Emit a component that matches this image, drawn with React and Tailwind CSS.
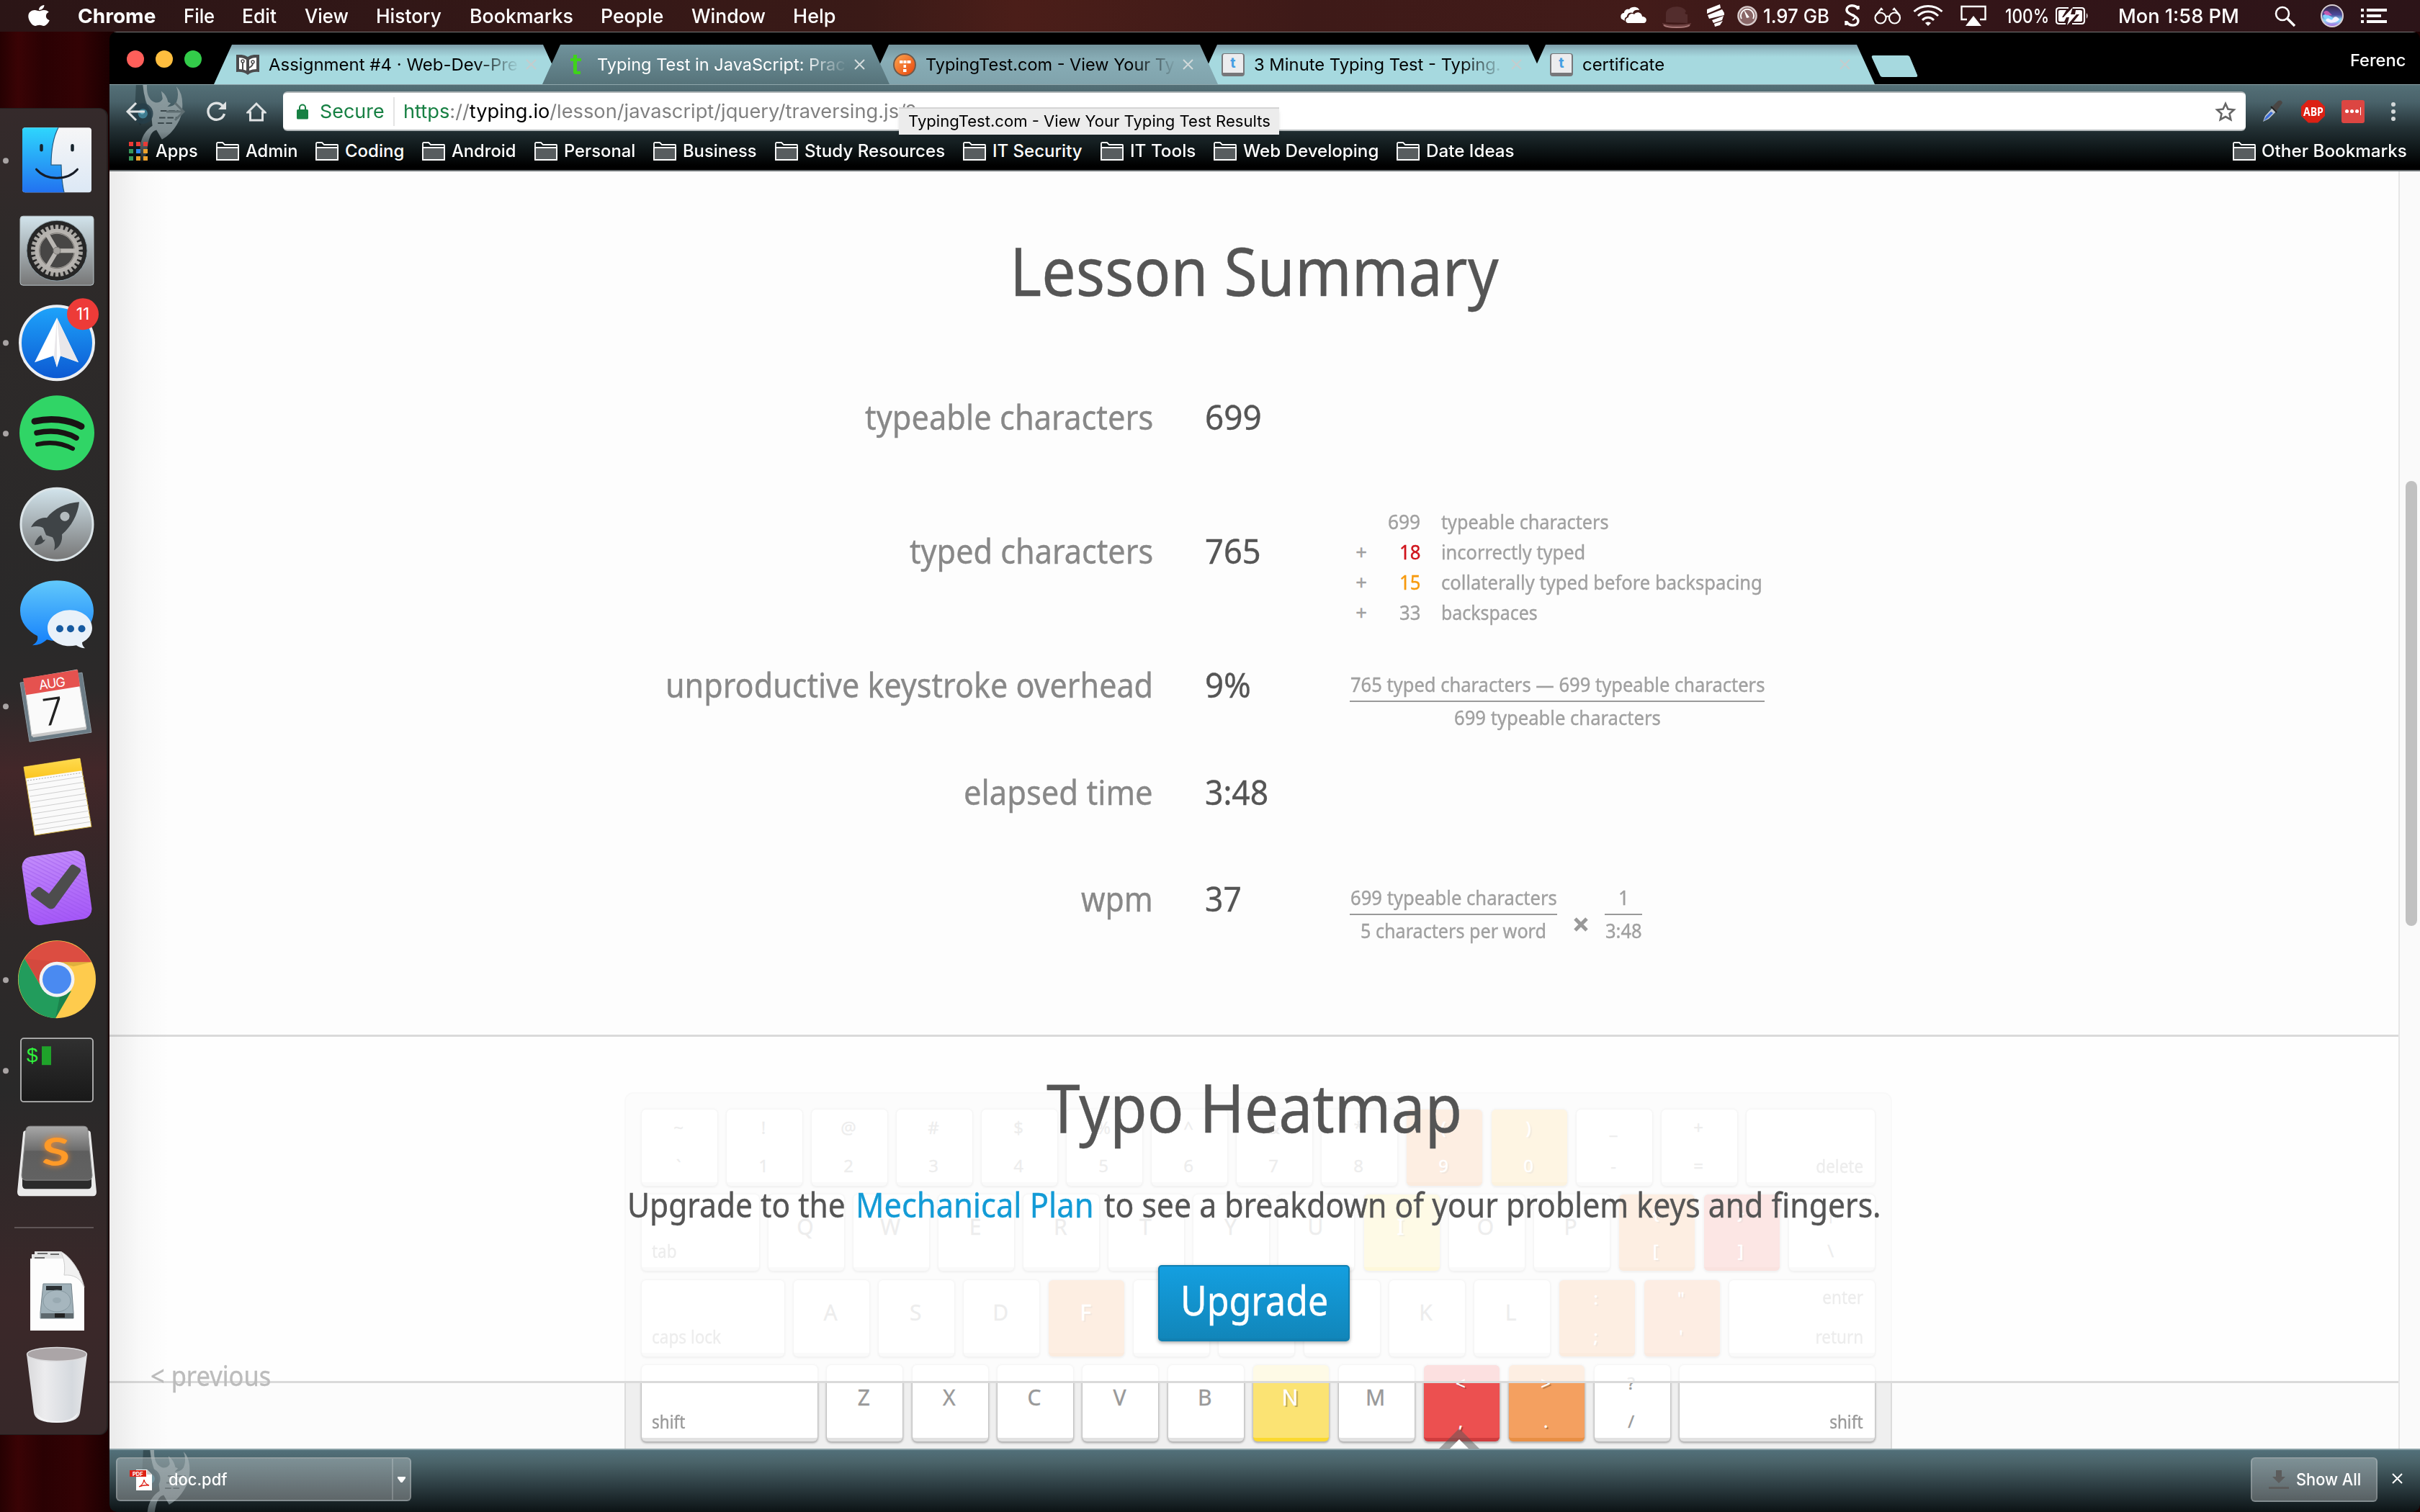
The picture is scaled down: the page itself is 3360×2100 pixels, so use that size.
import React, { useLayoutEffect, useRef } from "react";
import { FaApple } from "react-icons/fa";

/* Text set to an exact advance width: measured once, then stretched. */
function Fit({ w, className = "", children }) {
  const ref = useRef(null);
  useLayoutEffect(() => {
    const el = ref.current;
    el.style.transform = "none";
    const natural = el.offsetWidth;
    if (natural) el.style.transform = `scaleX(${w / natural})`;
  }, [w]);
  return (
    <span className={"block shrink-0 " + className} style={{ width: w }}>
      <span ref={ref} className="inline-block origin-left whitespace-pre">{children}</span>
    </span>
  );
}

/* ---------- Menu bar ---------- */
const menus = [
  ["Chrome", 108], ["File", 43], ["Edit", 48], ["View", 61], ["History", 91],
  ["Bookmarks", 144], ["People", 87], ["Window", 103], ["Help", 60],
];

function MenuBar() {
  return (
    <div className="flex h-[44px] items-center bg-[linear-gradient(90deg,#2b1516_0%,#351817_25%,#3a1a17_36%,#4b1e19_42%,#3e1a18_54%,#421b19_68%,#341518_80%,#2c1418_100%)] text-[27.5px] leading-[44px] text-white">
      <div className="ml-[39px] flex w-[69px]">
        <FaApple className="-mt-0.5 h-[33px] w-[30px]" preserveAspectRatio="none" />
      </div>
      <div className="flex gap-[38.5px]">
        {menus.map(([t, w], i) => (
          <Fit key={t} w={w} className={i === 0 ? "font-bold" : "font-medium"}>{t}</Fit>
        ))}
      </div>
      <div className="ml-auto mr-[46px] flex items-center">
        <svg className="h-[44px] w-[36px]" viewBox="0 0 36 44" fill="#fff">
          <path d="M1 26c-2-5 1-8 4-8 0-4 4-6 7-5 3-5 13-4 14 1-4-1-8 0-9 4-5-2-8 2-8 5-3 1-4 4-3 6z" />
          <path d="M10 32c-4-1-4-7 1-8 0-5 6-6 8-4 3-5 11-3 11 3 8 0 7 9 2 9z" />
        </svg>
        <svg className="ml-[22px] h-[44px] w-[40px]" viewBox="0 0 40 44">
          <path d="M5 31V19c0-12 25-13 28-3-3 2-1 4 2 4v12z" fill="#532d2d" />
          <path d="M0 32c5 3 32 3 40 0-1 4-5 7-20 7S2 37 0 32z" fill="#6c4040" />
          <path d="M2 35c6 4 30 4 36 0" stroke="#a87877" strokeWidth="2" fill="none" />
        </svg>
        <svg className="ml-[22px] h-[44px] w-[24px]" viewBox="0 0 24 44" fill="#fff">
          <path d="M0 13 18 6l1 5L0 19zM1 21l20-8 3 5v3L3 26zM7 28l16-6-2 6-12 4zM10 33l12-4-4 6-7 2z" />
        </svg>
        <svg className="ml-[18px] h-[44px] w-[28px]" viewBox="0 0 28 44">
          <circle cx="14" cy="22" r="12.6" fill="#8a6767" stroke="#d8cccc" strokeWidth="2.4" />
          <path d="M6 26a9 9 0 1 1 16 0" stroke="#fff" strokeWidth="1.8" fill="none" />
          <path d="M9 13l8 11-4 1z" fill="#fff" />
        </svg>
        <Fit w={92} className="ml-[8px] font-medium">1.97 GB</Fit>
        <svg className="ml-[21px] h-[44px] w-[22px]" viewBox="0 0 22 44" fill="none" stroke="#fff" strokeWidth="3.4">
          <path d="M19 8v5M19 13C16 6 4 6 3 13c-1 8 16 8 16 16 0 8-13 8-16 1M2 35v-6" />
          <path d="M11 20c5 2 5 5 0 8" strokeWidth="2" />
        </svg>
        <svg className="ml-[19px] h-[44px] w-[38px]" viewBox="0 0 38 44" fill="none" stroke="#fff" strokeWidth="2.2">
          <circle cx="9" cy="25" r="7.5" /><circle cx="28.5" cy="25" r="7.5" />
          <path d="M16.500 24c1-2 4-2 5 0M2 22 10 12l2 2M36 22 28 12l-2 2" />
        </svg>
        <svg className="ml-[16px] h-[44px] w-[42px]" viewBox="0 0 42 44" fill="none" stroke="#fff" strokeWidth="3">
          <path d="M1.500 16c11-10 28-10 39 0M7 22c8-8 20-8 28 0M13 28c5-5 11-5 16 0" />
          <path d="M21 36l-4-4c2-2 6-2 8 0z" fill="#fff" stroke="none" />
        </svg>
        <svg className="ml-[24px] h-[44px] w-[36px]" viewBox="0 0 36 44" fill="none" stroke="#fff" strokeWidth="2.4">
          <path d="M9 27H1.500V9h33v18H27" /><path d="M18 22 29 36H7z" fill="#fff" stroke="none" />
        </svg>
        <Fit w={61} className="ml-[26px] font-medium">100%</Fit>
        <svg className="ml-[9px] h-[44px] w-[46px]" viewBox="0 0 46 44" fill="none" stroke="#fff" strokeWidth="2.2">
          <path d="M18 11H5q-4 0-4 4v14q0 4 4 4h9M24 11h12q4 0 4 4v14q0 4-4 4H23" />
          <path d="M15 14H6q-2 0-2 2v12q0 2 2 2h6l3-6H9zM28 14h6q3 0 3 2v12q0 2-3 2h-9l8-10h-6z" fill="#fff" stroke="none" />
          <path d="M24 10 11 24h8l-3 11 13-15h-8z" fill="#fff" stroke="none" />
          <path d="M43 18q3 4 0 8z" fill="#fff" stroke="none" />
        </svg>
        <Fit w={168} className="ml-[41px] font-medium">Mon 1:58 PM</Fit>
        <svg className="ml-[49px] h-[44px] w-[30px]" viewBox="0 0 30 44" fill="none" stroke="#fff" strokeWidth="2.6">
          <circle cx="11" cy="19" r="9" /><path d="M17.500 25.500 28 36" strokeWidth="3.4" />
        </svg>
        <svg className="ml-[34px] h-[44px] w-[32px]" viewBox="0 0 32 44">
          <defs>
            <linearGradient id="siri" x1="0" y1="0" x2="0" y2="1">
              <stop offset="0" stopColor="#35233f" /><stop offset=".45" stopColor="#4b4a9c" />
              <stop offset=".7" stopColor="#8ee0f4" /><stop offset="1" stopColor="#a85ce0" />
            </linearGradient>
          </defs>
          <circle cx="16" cy="22" r="15" fill="url(#siri)" stroke="#d8cfd3" strokeWidth="2" />
          <path d="M3 22c7-8 18 12 26 2-3 9-9 8-14 5S6 29 3 22z" fill="#7fd0ff" />
          <path d="M7 28c4-7 7 3 10-2s7-2 9 1c-4 5-15 7-19 1z" fill="#f4f0ff" />
          <path d="M4 17c5-5 8 0 12 4-5 0-9 2-12-4z" fill="#e060b8" opacity=".8" />
        </svg>
        <svg className="ml-[24px] h-[44px] w-[36px]" viewBox="0 0 36 44" fill="#fff">
          <path d="M0 12h4v4H0zM8 12h28v4H8zM0 20h4v4H0zM8 20h20v4H8zM0 28h4v4H0zM8 28h28v4H8z" />
        </svg>
      </div>
    </div>
  );
}

/* ---------- Dock ---------- */
function DockItem({ running, children }) {
  return (
    <svg className="block h-[126.4px] w-[150px] shrink-0 overflow-visible" viewBox="0 -63.2 150 126.4">
      {running && <circle cx="8" cy="1" r="4" fill="#a9a4a4" />}
      {children}
    </svg>
  );
}

const teeth = Array.from({ length: 30 }, (_, i) => i * 12);
const noteLines = [-17, -9, -1, 7, 15, 23, 31, 39, 46];

function Dock() {
  return (
    <div className="mt-[106px] flex h-[1843px] w-[150px] flex-col rounded-r-[12px] border-y border-r-2 border-[#242020] bg-[linear-gradient(180deg,#352a2b_0%,#2e2a29_10%,#2a2929_40%,#2c2929_44%,#432729_50%,#3a2628_54%,#2e2929_62%,#292929_74%,#3b2829_90%,#372829_100%)] pt-[8px]">
      <svg className="absolute h-0 w-0">
        <defs>
          <linearGradient id="fBlue" x1="0" y1="0" x2="0" y2="1"><stop offset="0" stopColor="#2ed6fd" /><stop offset="1" stopColor="#2272f0" /></linearGradient>
          <linearGradient id="fWhite" x1="0" y1="0" x2="0" y2="1"><stop offset="0" stopColor="#f6f6f7" /><stop offset="1" stopColor="#dce8f5" /></linearGradient>
          <linearGradient id="metal" x1="0" y1="0" x2="0" y2="1"><stop offset="0" stopColor="#d2e4ec" /><stop offset="1" stopColor="#767676" /></linearGradient>
          <linearGradient id="spark" x1="0" y1="0" x2="0" y2="1"><stop offset="0" stopColor="#1ea4fb" /><stop offset="1" stopColor="#0c58d2" /></linearGradient>
          <linearGradient id="msg" x1="0" y1="0" x2="0" y2="1"><stop offset="0" stopColor="#62c9fb" /><stop offset="1" stopColor="#1480fb" /></linearGradient>
          <linearGradient id="omni" x1="0" y1="0" x2="0" y2="1"><stop offset="0" stopColor="#c28bfb" /><stop offset="1" stopColor="#a557f8" /></linearGradient>
          <linearGradient id="gold" x1="0" y1="0" x2="0" y2="1"><stop offset="0" stopColor="#ffdb50" /><stop offset="1" stopColor="#fbc51f" /></linearGradient>
          <linearGradient id="subl" x1="0" y1="0" x2="0" y2="1"><stop offset="0" stopColor="#a8a8a8" /><stop offset=".45" stopColor="#6c6c6c" /><stop offset=".46" stopColor="#5e5e5e" /><stop offset="1" stopColor="#626262" /></linearGradient>
          <linearGradient id="bin" x1="0" y1="0" x2="1" y2="0"><stop offset="0" stopColor="#d9d9db" /><stop offset=".3" stopColor="#ececee" /><stop offset=".75" stopColor="#d5d9de" /><stop offset="1" stopColor="#e6e6e8" /></linearGradient>
          <linearGradient id="term" x1="0" y1="0" x2="0" y2="1"><stop offset="0" stopColor="#303030" /><stop offset="1" stopColor="#181818" /></linearGradient>
          <pattern id="stripe" width="5" height="5" patternUnits="userSpaceOnUse" patternTransform="rotate(35)"><rect width="5" height="1.400" fill="#9350e6" opacity=".4" /></pattern>
        </defs>
      </svg>
      <DockItem running>
        <rect x="31" y="-45" width="96" height="90" rx="4" fill="url(#fWhite)" />
        <path d="M35-45h46C73-30 71-10 71 7h14q0 20 4 38H35q-4 0-4-4v-82q0-4 4-4z" fill="url(#fBlue)" />
        <path d="M81-45C73-30 71-10 71 7h14q0 20 4 38" fill="none" stroke="#235a80" strokeWidth="1.200" />
        <path d="M57.500-20v6M100.500-20v6" stroke="#16232c" strokeWidth="4.500" strokeLinecap="round" />
        <path d="M50.500 13c14 16 43 16 57 0" stroke="#161c26" strokeWidth="3" fill="none" strokeLinecap="round" />
      </DockItem>
      <DockItem>
        <rect x="28" y="-48" width="102" height="96" rx="4" fill="url(#metal)" stroke="#b9c4c8" strokeWidth="1" />
        <circle cx="79" cy="0" r="42" fill="#262626" stroke="#8fa0a8" strokeWidth="1" />
        {teeth.map((a) => <rect key={a} x="76.800" y="-36" width="4.400" height="9" fill="#a8a6a2" transform={`rotate(${a} 79 0)`} />)}
        <circle cx="79" cy="0" r="27" fill="#474645" stroke="#b6b3af" strokeWidth="7" />
        <circle cx="79" cy="0" r="24.500" fill="none" stroke="#77746f" strokeWidth="1" />
        <path d="M79 0h26M79 0 66-22M79 0 66 22" stroke="#b9b6b2" strokeWidth="6" />
        <circle cx="79" cy="0" r="5" fill="#a5a29e" stroke="#7b7875" />
      </DockItem>
      <DockItem running>
        <circle cx="79" cy="1" r="51" fill="url(#spark)" stroke="#ebeef2" strokeWidth="4" />
        <path d="M79-34 109 28 84 19 79 35 74 19 48 28z" fill="#fff" />
        <path d="M79-34 109 28 84 19zM79-34 75 20l4 15z" fill="#e9e7ea" />
        <circle cx="115" cy="-39" r="22" fill="#ed3b38" />
        <text x="115" y="-31" textAnchor="middle" fontSize="23" fill="#fff" fontFamily="Inter">11</text>
      </DockItem>
      <DockItem running>
        <circle cx="79" cy="0" r="52" fill="#30d566" />
        <g fill="none" stroke="#191414" strokeLinecap="round">
          <path d="M48-16c22-5 46-3 65 7" strokeWidth="9" />
          <path d="M51 0c19-4 39-2 55 7" strokeWidth="7.500" />
          <path d="M52 16c17-4 34-2 49 6" strokeWidth="6" />
        </g>
      </DockItem>
      <DockItem>
        <circle cx="79" cy="0" r="50" fill="url(#metal)" stroke="#dbe4e8" strokeWidth="3" />
        <path d="M110-31c-18 1-35 9-45 22-9-1-17 4-22 13 7-2 13-1 17 1l4 10 9 3c3 5 4 11 2 18 8-5 12-12 11-22C99 3 108-13 110-31z" fill="#3f4447" />
        <circle cx="90" cy="-11" r="6.500" fill="#b4bbbe" />
        <path d="M57 15c-5 3-8 8-9 14 6 0 13-3 15-8l-3 1z" fill="#3f4447" />
      </DockItem>
      <DockItem>
        <path d="M79-48c29 0 51 18 51 42S108 36 79 36c-6 0-10-1-14-2-5 5-12 8-20 8 6-4 8-7 7-13C38 22 28 10 28-6c0-24 22-42 51-42z" fill="url(#msg)" />
        <path d="M97-7c17 0 31 11 31 25 0 9-6 16-14 20 0 4 2 6 4 8-5 0-9-2-12-4-22 5-40-8-40-24 0-14 14-25 31-25z" fill="#e9f1f9" />
        <circle cx="83" cy="19" r="5" fill="#175aa0" /><circle cx="98" cy="19" r="5" fill="#175aa0" /><circle cx="113.500" cy="19" r="5" fill="#175aa0" />
      </DockItem>
      <DockItem running>
        <path d="M28-32 114-46 127 37 41 50z" fill="#6c7c86" stroke="#8c9aa2" />
        <path d="M33-37 107-50 120 31 44 42z" fill="#fafafa" stroke="#bdbdbd" />
        <path d="M32-38 108-50 111-27 36-15z" fill="#e5524f" />
        <path d="M44 40 120 29v4L46 44z" fill="#c9c9c9" />
        <g transform="rotate(-8 74 -27)" textAnchor="middle" fontFamily="Inter">
          <text x="73" y="-25" fontSize="18" fill="#fff" textLength="37">AUG</text>
          <text x="69" y="26" fontSize="52" fontWeight="300" fill="#222">7</text>
        </g>
      </DockItem>
      <DockItem>
        <path d="M33-42 111-54 127 41 48 53z" fill="#fafafa" stroke="#c8a838" strokeWidth="1" />
        <path d="M33-42 111-54 114-37 36-26z" fill="url(#gold)" />
        <g stroke="#cfcfcf" strokeWidth="1">
          {noteLines.map((y, i) => <line key={y} x1={38.5 + i * 1.3} y1={y} x2={116 + i * 1.3} y2={y - 12} />)}
        </g>
        <path d="M38-23 114-34" stroke="#aaa" strokeDasharray="2 2" />
      </DockItem>
      <DockItem>
        <g transform="rotate(-8 79 0)">
          <rect x="35" y="-48" width="88" height="96" rx="14" fill="url(#omni)" />
          <rect x="35" y="-48" width="88" height="96" rx="14" fill="url(#stripe)" />
        </g>
        <path d="M43 7 52-1q2-1 4 0L68 8 98-31q2-2 5-1l8 5q2 2 1 4L76 27q-4 4-9 1L44 11q-2-2-1-4z" fill="#4d4d4d" />
      </DockItem>
      <DockItem running>
        <circle cx="79" cy="0" r="54" fill="#fecb4d" />
        <path d="M34-29A54 54 0 0 1 127-24H79L57 10z" fill="#dc4d41" />
        <path d="M34-29A54 54 0 0 0 77 54l22-38-20 8-22-14z" fill="#229c5c" />
        <path d="M34-29 55 6l24-30z" fill="#b33a30" opacity=".2" />
        <path d="M79-24h48l-25 6z" fill="#a88020" opacity=".35" />
        <path d="M77 54 99 16l-16 8z" fill="#13693c" opacity=".5" />
        <circle cx="79" cy="0" r="24.500" fill="#f2f2f2" /><circle cx="79" cy="0" r="20" fill="#4a8af1" />
      </DockItem>
      <DockItem running>
        <rect x="29" y="-44" width="100" height="88" rx="4" fill="url(#term)" stroke="#b5b5b5" strokeWidth="1.800" />
        <text x="37" y="-11" fontSize="28" fill="#2ff23c" fontFamily="Liberation Sans">$</text>
        <rect x="58" y="-33" width="13" height="26" fill="#1fa32a" />
      </DockItem>
      <DockItem>
        <path d="M36-42h86q4 0 4 4l8 81q0 6-5 6H29q-5 0-5-6l8-81q0-4 4-4z" fill="#e9e9e9" />
        <path d="M31 22h96v12q0 5-5 5H36q-5 0-5-5z" fill="#2b2b2b" />
        <path d="M42-48h74q6 0 6 6l6 62q0 7-6 7H36q-6 0-6-7l6-62q0-6 6-6z" fill="url(#subl)" stroke="#8b8b8b" />
        <text x="58" y="7" fontSize="54" fontWeight="700" fill="#ff9a28" fontFamily="Lato" textLength="39" lengthAdjust="spacingAndGlyphs" className="drop-shadow-[0_0_4px_#e8842a]">S</text>
      </DockItem>
      <div className="ml-[20px] mt-[28px] h-[2px] w-[110px] shrink-0 bg-[#5f5556]" />
      <svg className="mt-[32px] block h-[110px] w-[150px] shrink-0" viewBox="0 0 150 110">
        <path d="M48 0h36l26 28v10H44V4h4z" fill="#e4e4e4" />
        <path d="M42 10h46q2 8 1 22 20-2 28 18v60H42z" fill="#fdfdfd" />
        <path d="M84 0c12 6 27 24 33 50-5-13-15-18-28-17 2-12 0-24-5-33z" fill="#f1f1f1" stroke="#cfcfcf" strokeWidth="1" />
        <path d="M52 3h14M48 9h14M70 4h12" stroke="#6b6b6b" strokeWidth="2" />
        <path d="M60 45h39l3 40v8H56v-8z" fill="#9fb0b8" stroke="#75848c" />
        <path d="M57 86h45v7H57z" fill="#5e696e" /><path d="M76 86h14v6H76z" fill="#222" />
        <path d="M64 48h22v6H64z" fill="#2b3033" />
        <ellipse cx="79" cy="69" rx="19" ry="15" fill="#a6b6be" stroke="#8799a1" /><ellipse cx="79" cy="68" rx="6" ry="4" fill="#98a9b1" />
      </svg>
      <svg className="mt-[22px] block h-[108px] w-[150px] shrink-0" viewBox="0 0 150 108">
        <path d="M37 11 47 92q2 14 32 14t32-14l10-81z" fill="url(#bin)" />
        <path d="M50 92q8 12 29 12t29-12q-1 13-29 14-28-1-29-14z" fill="#f6f6f8" opacity=".8" />
        <ellipse cx="79" cy="11" rx="41.500" ry="9.500" fill="#aba5a7" stroke="#dcdcde" strokeWidth="1.500" />
      </svg>
    </div>
  );
}

/* ---------- Browser chrome ---------- */
function Close({ color = "#c5cccd" }) {
  return (
    <svg className="h-[15px] w-[15px]" viewBox="0 0 15 15" stroke={color} strokeWidth="2"><path d="M1 1l13 13M14 1 1 14" /></svg>
  );
}

function BookIcon() {
  return (
    <svg className="h-[28px] w-[32px]" viewBox="0 0 32 28">
      <path d="M0 0q10-1 16 3 6-4 16-3v24q-10-1-16 4-6-5-16-4z" fill="#4b4b4d" />
      <path d="M4 4q6 0 10 3v15q-4-2-10-2zM28 4q-6 0-10 3v15q4-2 10-2z" fill="#fff" />
      <path d="M9 10v11M23 10q1 5-5 8" stroke="#4b4b4d" strokeWidth="2" fill="none" />
      <circle cx="9" cy="9" r="2" fill="#fff" stroke="#4b4b4d" strokeWidth="1.500" /><circle cx="23" cy="10" r="2" fill="#fff" stroke="#4b4b4d" strokeWidth="1.500" />
    </svg>
  );
}
function TIcon() {
  return (
    <svg className="ml-[8px] mr-[9px] h-[28px] w-[15px]" viewBox="0 0 15 28"><path d="M4 0h5v5h6v4H9v14h5v4H7q-3 0-3-3V9H0V5h4z" fill="#3fd31a" /></svg>
  );
}
function OrangeIcon() {
  return (
    <svg className="h-[32px] w-[32px]" viewBox="0 0 32 32">
      <defs><linearGradient id="org" x1="0" y1="0" x2="1" y2="1"><stop offset="0" stopColor="#fba850" /><stop offset="1" stopColor="#e8430c" /></linearGradient></defs>
      <circle cx="16" cy="16" r="15" fill="url(#org)" stroke="#6d5a4c" strokeWidth="2" />
      <path d="M9 10h4.500v4H9zM14.500 10h4v4h-4zM19.500 10h5v4h-5zM14.500 16h3.500v4h-3.500zM14 22h4.500v4H14z" fill="#fff" />
    </svg>
  );
}
function KeyIcon() {
  return (
    <div className="flex h-[32px] w-[32px] justify-center rounded-[4px] border-x-2 border-b-[5px] border-t border-[#77777a] bg-[#ececee] font-['Inter'] text-[20px] font-bold leading-[25px] text-[#459fe3]">t</div>
  );
}

const tabs = [
  { t: "Assignment #4 · Web-Dev-Pre", w: 346, Icon: BookIcon, z: "z-[1]", bg: "bg-[linear-gradient(180deg,#7d9da9_0px,#95bfc8_8px,#a6d9df_17px)]", close: "#c5cccd", fade: true },
  { t: "Typing Test in JavaScript: Prac", w: 345, Icon: TIcon, z: "z-[5]", bg: "bg-[linear-gradient(180deg,#70939c_0px,#56737a_55px)] text-white", close: "#d5dcdd", fade: true },
  { t: "TypingTest.com - View Your Ty", w: 346, Icon: OrangeIcon, z: "z-[4]", bg: "bg-[linear-gradient(180deg,#75959e_0px,#88adb6_20px,#80a3ac_55px)]", close: "#d2d9da", fade: true },
  { t: "3 Minute Typing Test - Typing.", w: 343, Icon: KeyIcon, z: "z-[3]", bg: "bg-[linear-gradient(180deg,#7d9da9_0px,#95bfc8_8px,#a6d9df_17px)]", close: "#c5cccd", fade: true },
  { t: "certificate", w: 114, Icon: KeyIcon, z: "z-[2]", bg: "bg-[linear-gradient(180deg,#7d9da9_0px,#95bfc8_8px,#a6d9df_17px)]", close: "#c5cccd" },
];

function TabStrip() {
  return (
    <div className="flex h-[72px] items-end bg-black">
      <div className="mb-[23px] ml-[24px] flex gap-[16px]">
        <div className="h-[24px] w-[24px] rounded-full bg-[#ff5f5a]" />
        <div className="h-[24px] w-[24px] rounded-full bg-[#ffbe3f]" />
        <div className="h-[24px] w-[24px] rounded-full bg-[#33cc4a]" />
      </div>
      <div className="ml-[17px] flex">
        {tabs.map(({ t, w, Icon, z, bg, close, fade }) => (
          <div key={t} className={`relative -mr-[26px] flex h-[55px] w-[482px] items-center text-[23.5px] leading-[55px] text-black [clip-path:polygon(25px_0,457px_0,482px_100%,0_100%)] ${z} ${bg}`}>
            <div className="ml-[31px] w-[45px]"><Icon /></div>
            <div className={fade ? "w-[345px] overflow-hidden [mask-image:linear-gradient(90deg,#000_83%,transparent_101%)]" : "w-[345px]"}>
              <Fit w={w}>{t}</Fit>
            </div>
            <div className="ml-[12px]"><Close color={close} /></div>
          </div>
        ))}
      </div>
      <svg className="mb-[10px] ml-[21px] h-[30px] w-[65px]" viewBox="0 0 65 30">
        <path d="M3 0h47q3 0 4 3l10 24q1 3-2 3H16q-3 0-4-3L1 3q-1-3 2-3z" fill="#a6d9df" />
      </svg>
      <div className="mb-[17px] ml-auto mr-[20px] text-[23px] leading-[32px] text-white"><Fit w={77} className="font-medium">Ferenc</Fit></div>
    </div>
  );
}

/* Silver claw ornament of the browser theme. */
function Claw({ className }) {
  return (
    <svg className={className} viewBox="0 0 90 112">
      <defs>
        <linearGradient id="silver" x1="0" y1="0" x2="0" y2="1">
          <stop offset="0" stopColor="#8fa0a4" /><stop offset=".6" stopColor="#7d8b8f" /><stop offset="1" stopColor="#4a5457" stopOpacity=".35" />
        </linearGradient>
      </defs>
      <path d="M10 0h14q-4 26 6 36L16 60 8 40z" fill="#16272c" opacity=".45" />
      <path d="M20 0h6q-1 22 13 26 8 0 10-6l-2-11q8 6 10 16l4 2-5 5q9 0 13-6 5-12 0-24 10 10 9 30 0 14-8 26-8 14-22 22l-8-14q-12 2-14 34l-8 14-2-22q2-22 18-32l-2-20q-10-16-12-40z" fill="url(#silver)" />
      <circle cx="20" cy="42" r="15" fill="#263e49" opacity=".85" /><circle cx="20" cy="42" r="7" fill="#3f7c90" />
      <circle cx="19" cy="40" r="3" fill="#7cc0d0" opacity=".7" />
      <path d="M46 38h26M44 48h28M42 56h24" stroke="#3b484c" strokeWidth="2" strokeDasharray="9 3" />
    </svg>
  );
}

function Folder() {
  return (
    <svg className="h-[26px] w-[32px]" viewBox="0 0 32 26" fill="none" stroke="#fff" strokeWidth="1.800">
      <path d="M1 24V2.500Q1 1 2.500 1H9l3 3h18.500Q31 4 31 5v19q0 1-1 1H2q-1 0-1-1z" />
      <path d="M1 8h30v17H1z" fill="#585d5f" />
    </svg>
  );
}

const bookmarks = [
  ["Admin", 72], ["Coding", 82], ["Android", 90], ["Personal", 99], ["Business", 103], ["Study Resources", 195],
  ["IT Security", 125], ["IT Tools", 91], ["Web Developing", 188], ["Date Ideas", 123],
];
const appColors = ["bg-[#ea3a36]", "bg-[#ea3a36]", "bg-[#ea3a36]", "bg-[#37975a]", "bg-[#2c86ee]", "bg-[#eda12c]", "bg-[#37975a]", "bg-[#eda12c]", "bg-[#eda12c]"];

function Toolbar() {
  return (
    <div className="relative h-[121px] border-b-2 border-t border-b-[#6b7173] border-t-[#8fa6ab] bg-[linear-gradient(180deg,#547077_0%,#49626a_20%,#243236_50%,#111a1c_72%,#000_95%)]">
      <Claw className="absolute left-[27px] top-0 h-[106px] w-[86px]" />
      <div className="relative flex h-[73px] items-center">
        <svg className="ml-[22px] h-[28px] w-[28px]" viewBox="0 0 28 28" stroke="#dfe2e3" strokeWidth="3" fill="none"><path d="M27 14H3M15 2 3 14l12 12" /></svg>
        <svg className="ml-[28px] h-[28px] w-[28px]" viewBox="0 0 28 28" stroke="#5f6e72" strokeWidth="3" fill="none"><path d="M1 14h24M13 2l12 12-12 12" /></svg>
        <svg className="ml-[28px] h-[28px] w-[30px]" viewBox="0 0 30 28" fill="none" stroke="#dfe2e3" strokeWidth="3.400"><path d="M23 6A11.500 11.500 0 1 0 25.500 17" /><path d="M28 0v11H17z" fill="#dfe2e3" stroke="none" /></svg>
        <svg className="ml-[26px] h-[28px] w-[28px]" viewBox="0 0 28 28" fill="none" stroke="#dfe2e3" strokeWidth="3"><path d="M2 15 14 3l12 12h-3.500v11h-17V15z" /></svg>
        <div className="ml-[23px] flex h-[55px] w-[2725px] items-center rounded-[6px] border-y-2 border-[#b0b6b8] bg-white text-[26px] leading-[50px]">
          <svg className="ml-[19px] h-[22px] w-[16px]" viewBox="0 0 16 22"><rect y="8" width="16" height="13.500" rx="1.500" fill="#178043" /><path d="M4 9V5.500a4 4 0 0 1 8 0V9" stroke="#178043" strokeWidth="2" fill="none" /></svg>
          <Fit w={90} className="ml-[16px] text-[#178043]">Secure</Fit>
          <div className="ml-[12px] mr-[12px] h-[40px] w-[2px] bg-[#e4e4e4]" />
          <Fit w={712} className="text-[#808080]"><span className="text-[#178043]">https</span>://<span className="text-black">typing.io</span>/lesson/javascript/jquery/traversing.js/?</Fit>
          <svg className="ml-auto mr-[13px] h-[30px] w-[30px]" viewBox="0 0 30 30" fill="none" stroke="#666" strokeWidth="2.600"><path d="M15 4l3.400 7.600 8.300.9-6.200 5.500 1.800 8.200L15 22l-7.300 4.200 1.800-8.200-6.200-5.500 8.300-.9z" /></svg>
        </div>
        <svg className="ml-[21px] h-[32px] w-[32px]" viewBox="0 0 32 32"><path d="M3 30 6 22 17 10l5 5L11 26z" fill="#c4ccd4" /><path d="M4 29l3-6 7-7 3 2-7 7z" fill="#3d6ed8" /><path d="M15 10l9-9q5-2 6 3L21 16z" fill="#4a4644" /><path d="M14 9l8 8" stroke="#222" strokeWidth="2" /></svg>
        <div className="ml-[24px] flex h-[32px] w-[33px] items-center justify-center bg-[#dc2114] font-['Open_Sans'] text-[16px] font-bold text-white [clip-path:polygon(30%_0,70%_0,100%_30%,100%_70%,70%_100%,30%_100%,0_70%,0_30%)]"><Fit w={28}>ABP</Fit></div>
        <div className="ml-[23px] flex h-[32px] w-[32px] items-center justify-center gap-[2px] rounded-[3px] bg-[#dc4642]">
          <div className="h-[5px] w-[5px] rounded-full bg-white" /><div className="h-[5px] w-[5px] rounded-full bg-white" /><div className="h-[5px] w-[5px] rounded-full bg-white" /><div className="h-[11px] w-px bg-white" />
        </div>
        <div className="ml-[37px] flex flex-col gap-[4px]">
          <div className="h-[6px] w-[6px] rounded-full bg-[#d3d8d9]" /><div className="h-[6px] w-[6px] rounded-full bg-[#d3d8d9]" /><div className="h-[6px] w-[6px] rounded-full bg-[#d3d8d9]" />
        </div>
      </div>
      <div className="relative flex h-[37px] items-center text-[24px] font-medium leading-[37px] text-white">
        <div className="ml-[27px] grid grid-cols-3 gap-[4px]">
          {appColors.map((c, i) => <div key={i} className={"h-[6px] w-[6px] " + c} />)}
        </div>
        <Fit w={59} className="ml-[11px]">Apps</Fit>
        {bookmarks.map(([t, w]) => (
          <div key={t} className="ml-[25px] flex items-center gap-[9px]"><Folder /><Fit w={w}>{t}</Fit></div>
        ))}
        <div className="ml-auto mr-[18px] flex items-center gap-[8px]"><Folder /><Fit w={202}>Other Bookmarks</Fit></div>
      </div>
      <div className="absolute left-[1096px] top-[31px] z-10 h-[38px] w-[528px] border-t-2 border-[#d4d4d4] bg-[#ececec] pl-[13px] text-[22px] leading-[35px] text-black shadow-md">
        <Fit w={503}>TypingTest.com - View Your Typing Test Results</Fit>
      </div>
    </div>
  );
}

/* ---------- Lesson page ---------- */
function Row({ h, label, lw, value, vw, children }) {
  return (
    <div className={"flex " + h}>
      <div className="flex w-[1449px] items-center justify-end text-[47px] text-[#888]"><Fit w={lw}>{label}</Fit></div>
      <div className="ml-[72px] flex w-[201px] items-center text-[47px] text-[#555]"><Fit w={vw}>{value}</Fit></div>
      <div className="text-[27.5px] text-[#a0a0a0]">{children}</div>
    </div>
  );
}

function Fraction({ w, top, tw, bottom, bw }) {
  return (
    <div className={"flex flex-col items-center " + w}>
      <Fit w={tw} className="leading-[44px]">{top}</Fit>
      <div className="h-[2px] w-full bg-[#999]" />
      <Fit w={bw} className="leading-[43px]">{bottom}</Fit>
    </div>
  );
}

const parts = [
  ["", "699", 45, "text-[#a0a0a0]", "typeable characters", 233],
  ["+", "18", 29, "text-[#d0141c]", "incorrectly typed", 200],
  ["+", "15", 29, "text-[#f79a0e]", "collaterally typed before backspacing", 446],
  ["+", "33", 29, "text-[#a0a0a0]", "backspaces", 134],
];

function Summary() {
  return (
    <div className="h-[1199px] bg-[#fdfdfd]">
      <div className="flex justify-center pt-[87px] text-[93px] leading-[100px] text-[#555]"><Fit w={679}>Lesson Summary</Fit></div>
      <div className="mt-[61px]">
        <Row h="h-[187px]" label="typeable characters" lw={400} value="699" vw={79} />
        <Row h="h-[185px]" label="typed characters" lw={338} value="765" vw={78}>
          <div className="pl-[7px] pt-[31px]">
            {parts.map(([sign, n, nw, color, text, w]) => (
              <div key={text} className="flex h-[42px] items-center leading-[42px]">
                <div className="w-[18px] text-center">{sign}</div>
                <div className={"flex w-[73px] justify-end " + color}><Fit w={nw}>{n}</Fit></div>
                <Fit w={w} className="ml-[29px]">{text}</Fit>
              </div>
            ))}
          </div>
        </Row>
        <Row h="h-[186px]" label="unproductive keystroke overhead" lw={677} value="9%" vw={64}>
          <div className="pt-[71px]"><Fraction w="w-[576px]" top="765 typed characters — 699 typeable characters" tw={575} bottom="699 typeable characters" bw={287} /></div>
        </Row>
        <Row h="h-[112px]" label="elapsed time" lw={263} value="3:48" vw={88} />
        <Row h="h-[184px]" label="wpm" lw={100} value="37" vw={51}>
          <div className="flex pt-[69px]">
            <Fraction w="w-[288px]" top="699 typeable characters" tw={287} bottom="5 characters per word" bw={258} />
            <svg className="ml-[23px] mr-[23px] mt-[49px] h-[20px] w-[20px]" viewBox="0 0 20 20" stroke="#999" strokeWidth="5"><path d="M2 2l16 16M18 2 2 18" /></svg>
            <Fraction w="w-[52px]" top="1" tw={15} bottom="3:48" bw={51} />
          </div>
        </Row>
      </div>
    </div>
  );
}

const O = "bg-[#f4a060] border-b-[#e88f45]";
const A = "bg-[#fbc566] border-b-[#efb54a]";
const Y = "bg-[#fbe373] border-b-[#fbd92f]";
const R = "bg-[#ec5050] border-b-[#d03c3e]";
const P = "bg-[#f07468] border-b-[#e4604f]";
const keyRows = [
  { keys: [["~", "`"], ["!", "1"], ["@", "2"], ["#", "3"], ["$", "4"], ["%", "5"], ["^", "6"], ["&", "7"], ["*", "8"], ["(", "9", O], [")", "0", A], ["_", "-"], ["+", "="]], rightW: "w-[178px]", right: ["", "delete"] },
  { leftW: "w-[163px]", left: "tab", keys: [["Q"], ["W"], ["E"], ["R"], ["T"], ["Y"], ["U"], ["I", null, Y], ["O"], ["P"], ["{", "[", O], ["}", "]", P], ["|", "\\"]], last: true },
  { leftW: "w-[198px]", left: "caps lock", keys: [["A"], ["S"], ["D"], ["F", null, O], ["G"], ["H"], ["J"], ["K"], ["L"], [":", ";", O], ["\"", "'", "bg-[#f49a64] border-b-[#ea8b50]"]], rightW: "w-[202px]", right: ["enter", "return"] },
  { leftW: "w-[244px]", left: "shift", keys: [["Z"], ["X"], ["C"], ["V"], ["B"], ["N", null, Y], ["M"], ["<", ",", R], [">", ".", O], ["?", "/"]], rightW: "w-[271px]", right: ["", "shift"] },
];
const keyBase = "h-[106px] shrink-0 rounded-[6px] border-b-[5px] shadow-[0_0_3px_1px_#bbb,0_2px_3px_#aaa] ";
const white = "bg-white border-b-[#e2e2e2] text-[#999]";
const hot = " text-white [text-shadow:2px_2px_1px_rgba(0,0,0,0.3)]";

function Key({ k, wide }) {
  const [a, b, color] = k;
  return (
    <div className={keyBase + (wide ? "w-[119px] " : "w-[105px] ") + "flex flex-col items-center pr-[3px] " + (color ? color + hot : white)}>
      {b == null ? (
        <div className="mt-[23px] text-[30px] leading-[44px]">{a}</div>
      ) : (
        <>
          <div className="mt-[9px] text-[24px] leading-[32px]">{a}</div>
          <div className="mt-[21px] text-[24px] leading-[32px]">{b}</div>
        </>
      )}
    </div>
  );
}

function Keyboard() {
  return (
    <div className="absolute left-[715px] top-[80px] flex h-[640px] w-[1760px] flex-col gap-[12.3px] rounded-[12px] border-2 border-[#dcdcdc] bg-[#efefef] px-[22px] pt-[22px] text-[#999]">
      {keyRows.map((r, i) => (
        <div key={i} className="flex justify-between">
          {r.left && <div className={keyBase + white + " flex items-end px-[14px] pb-[7px] text-[25px] leading-[32px] " + r.leftW}><span className="inline-block origin-left scale-x-90 whitespace-nowrap">{r.left}</span></div>}
          {r.keys.map((k, j) => <Key key={j} k={k} wide={r.last && j === r.keys.length - 1} />)}
          {r.right && (
            <div className={keyBase + white + " flex flex-col items-end justify-between px-[16px] pb-[7px] pt-[7px] text-[25px] leading-[32px] " + r.rightW}>
              <span className="origin-right scale-x-90">{r.right[0]}</span><span className="origin-right scale-x-90">{r.right[1]}</span>
            </div>
          )}
        </div>
      ))}
    </div>
  );
}

function Heatmap() {
  return (
    <div className="relative h-[575px] overflow-hidden bg-[#fcfcfc]">
      <Keyboard />
      <div className="relative h-[484px] border-y-[3px] border-[#dadada] bg-white/82 text-[#555]">
        <div className="flex justify-center pt-[47px] text-[93px] leading-[100px]"><Fit w={577}>Typo Heatmap</Fit></div>
        <div className="mt-[56px] flex justify-center gap-[14px] text-[47px] leading-[60px]">
          <Fit w={303}>Upgrade to the</Fit>
          <Fit w={331} className="text-[#139bd6]">Mechanical Plan</Fit>
          <Fit w={1079}>to see a breakdown of your problem keys and fingers.</Fit>
        </div>
        <div className="mt-[54px] flex justify-center">
          <div className="flex h-[106px] w-[266px] justify-center rounded-[5px] border-2 border-b-4 border-[#1180b2] bg-[linear-gradient(180deg,#149fe0,#1186ba)] text-[56px] leading-[93px] text-white shadow-[0_2px_5px_rgba(0,0,0,0.35)]">
            <Fit w={205}>Upgrade</Fit>
          </div>
        </div>
      </div>
      <svg className="absolute left-[1846px] top-[547px] h-[28px] w-[58px]" viewBox="0 0 58 28"><path d="M28 0 56 28H0z" fill="#555" opacity=".5" /><path d="M28 15 41 28H15z" fill="#fff" /></svg>
      <div className="absolute left-[57px] top-[448px] text-[39px] leading-[50px] text-[#bcbcbc]"><Fit w={167}>{"< previous"}</Fit></div>
    </div>
  );
}

function DownloadBar() {
  return (
    <div className="relative flex h-[88px] items-start rounded-bl-[10px] rounded-br-[10px] border-t-2 border-[#8aa0a6] bg-[linear-gradient(180deg,#52707a_0%,#4a6369_20%,#2b3b40_60%,#0c1315_100%)] pt-[10px] text-[23px] font-medium leading-[58px] text-white">
      <Claw className="absolute left-[37px] top-0 h-[106px] w-[86px]" />
      <div className="relative ml-[9px] flex h-[61px] w-[410px] items-center rounded-[6px] border-2 border-white/20 bg-[linear-gradient(180deg,rgba(165,178,182,0.55),rgba(150,155,157,0.55))]">
        <svg className="ml-[17px] h-[30px] w-[32px]" viewBox="0 0 32 30">
          <path d="M9 1h15l7 7v22H9z" fill="#fff" /><path d="M24 1v7h7z" fill="#ccc" />
          <rect y="2" width="23" height="9" fill="#dd2016" />
          <text x="4" y="9.500" fontSize="7.500" fontWeight="700" fill="#fff" fontFamily="Inter">PDF</text>
          <path d="M13 25q6-3 7-10 1 6 7 8-7-1-14 2z" fill="none" stroke="#dd2016" strokeWidth="1.300" />
        </svg>
        <Fit w={82} className="ml-[22px]">doc.pdf</Fit>
        <div className="ml-auto flex h-full w-[25px] items-center justify-center border-l-2 border-white/20">
          <svg className="h-[8px] w-[11px]" viewBox="0 0 11 8"><path d="M0 0h11v2L6.500 8h-2L0 2z" fill="#fff" /></svg>
        </div>
      </div>
      <div className="ml-auto flex h-[62px] w-[176px] items-center rounded-[6px] border-2 border-white/20 bg-[linear-gradient(180deg,rgba(165,178,182,0.55),rgba(150,155,157,0.5))]">
        <svg className="ml-[23px] h-[26px] w-[28px]" viewBox="0 0 28 26" fill="#5c5c5c"><path d="M10 0h8v9h5l-9 9-9-9h5zM0 23h28v3H0z" /></svg>
        <Fit w={90} className="ml-[10px]">Show All</Fit>
      </div>
      <div className="ml-[20px] mr-[24px] mt-[22px]"><Close color="#fff" /></div>
    </div>
  );
}

export default function App() {
  return (
    <div className="flex h-[2100px] w-[3360px] flex-col overflow-hidden bg-[linear-gradient(90deg,#260102_0px,#3a0305_25px,#2a0103_60px,#330204_110px,#1c0001_152px)] font-['Inter',sans-serif]">
      <MenuBar />
      <div className="flex h-[2056px]">
        <div className="w-[152px] shrink-0"><Dock /></div>
        <div className="flex w-[3208px] flex-col overflow-hidden rounded-[10px]">
          <div className="border-t border-[#777]"><TabStrip /></div>
          <Toolbar />
          <div className="flex h-[1774px]">
            <div className="relative w-[3178px] font-['Noto_Sans',sans-serif] [-webkit-text-stroke:0.4px_currentColor]">
              <Summary />
              <Heatmap />
              <div className="absolute inset-y-0 left-0 w-[84px] bg-[linear-gradient(90deg,rgba(0,0,0,0.07),rgba(0,0,0,0.02)_50%,transparent)]" />
            </div>
            <div className="w-[30px] border-l-2 border-[#e6e6e6] bg-[#fafafa]">
              <div className="ml-[8px] mt-[430px] h-[618px] w-[16px] rounded-full bg-[#c1c1c1]" />
            </div>
          </div>
          <DownloadBar />
        </div>
      </div>
    </div>
  );
}
